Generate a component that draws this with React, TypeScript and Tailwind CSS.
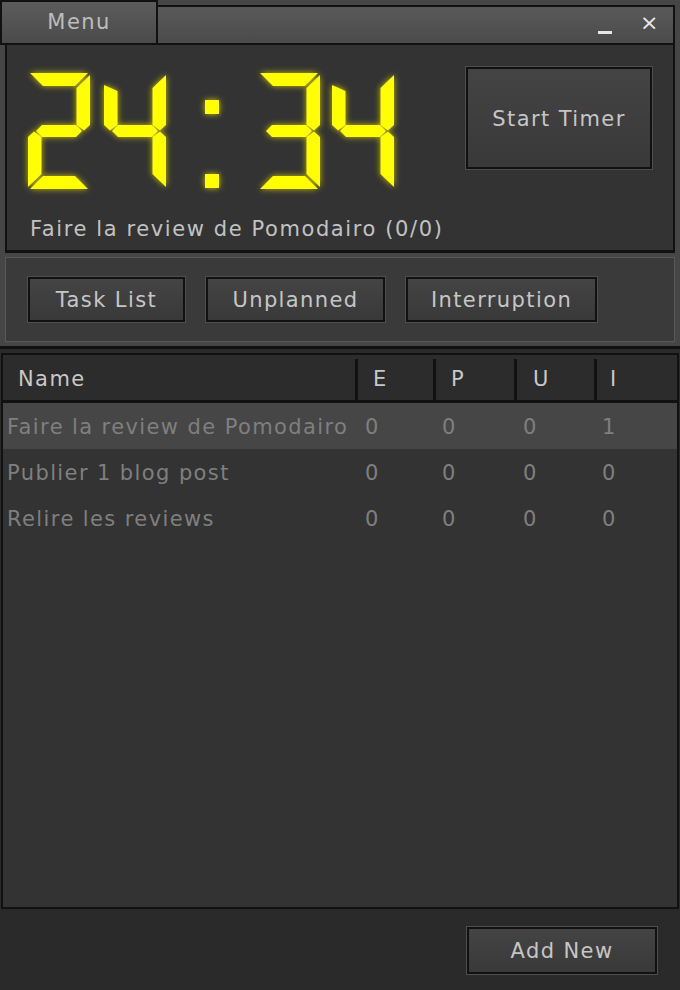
import React from "react";

const SEG: Record<string, string> = {
  a: "2,0 60,0 47,13 15,13",
  b: "62,2 62,52 56,57.5 48.5,52 48.5,15",
  c: "62,114 62,64 56,58.5 48.5,64 48.5,101",
  d: "2,116 60,116 47,103 15,103",
  e: "0,114 0,64 6,58.5 13.5,64 13.5,101",
  f: "0,2 0,52 6,57.5 13.5,52 13.5,15",
  g: "8,58 14,52 48,52 54,58 48,64 14,64",
};

const SEG4F = "0,12 0,52 6,57.5 13.5,52 13.5,18";

const DIGITS: Record<string, string[]> = {
  "2": ["a", "b", "g", "e", "d"],
  "3": ["a", "b", "g", "c", "d"],
  "4": ["f", "g", "b", "c"],
};

function Digit({ d }: { d: string }) {
  return (
    <svg width="64" height="116" viewBox="-1 0 64 116" className="[filter:drop-shadow(0_0_3px_rgba(255,240,0,0.75))]">
      {DIGITS[d].map((s) => (
        <polygon key={s} points={d === "4" && s === "f" ? SEG4F : SEG[s]} fill="#ffff00" />
      ))}
    </svg>
  );
}

function Colon() {
  return (
    <div className="flex flex-col justify-between h-[116px] pt-[27px] pb-[1px] [filter:drop-shadow(0_0_3px_rgba(255,240,0,0.75))]">
      <div className="w-[14px] h-[14px] bg-[#ffff00]" />
      <div className="w-[14px] h-[14px] bg-[#ffff00]" />
    </div>
  );
}

function Btn({ children, className = "" }: { children: React.ReactNode; className?: string }) {
  return (
    <div className={`border border-[#4e4e4e] ${className}`}>
      <div className="h-full w-full border-2 border-[#111] bg-gradient-to-b from-[#444] to-[#393939] flex items-center justify-center text-[#c6c6c6] pt-[3px]">
        {children}
      </div>
    </div>
  );
}

const font = { fontFamily: '"DejaVu Sans", Verdana, sans-serif' };

const rows = [
  { name: "Faire la review de Pomodairo", v: ["0", "0", "0", "1"], sel: true },
  { name: "Publier 1 blog post", v: ["0", "0", "0", "0"], sel: false },
  { name: "Relire les reviews", v: ["0", "0", "0", "0"], sel: false },
];

export default function App() {
  return (
    <div className="w-[680px] h-[990px] bg-[#2a2a2a] flex flex-col overflow-hidden text-[21px] tracking-[1.4px]" style={font}>
      {/* top window */}
      <div className="bg-[#464646] flex flex-col border-b-[3px] border-[#111]">
        {/* title row */}
        <div className="flex h-[45px]">
          <div className="w-[158px] h-[45px] border-2 border-[#111] bg-gradient-to-b from-[#5c5c5c] to-[#4a4a4a] flex items-center justify-center text-[#bdbdbd] pt-[1px]">
            Menu
          </div>
          <div className="flex-1 mt-[5px] h-[40px] border-t-2 border-b-2 border-r-2 border-[#111] bg-gradient-to-b from-[#595959] to-[#4b4b4b] relative mr-[5px]">
            <div className="absolute top-[24px] w-[14px] h-[3px] bg-[#e6e6e6]" style={{ left: 440 }} />
            <div className="absolute top-[5px] text-[#e8e8e8] text-[22px] leading-none" style={{ left: 482 }}>×</div>
          </div>
        </div>
        {/* timer panel */}
        <div className="mx-[5px] h-[208px] bg-[#333] border-l-2 border-r-2 border-b-[3px] border-[#111] flex">
          <div className="flex-1 flex flex-col pl-[20px]">
            <div className="flex items-start mt-[28px]">
              <Digit d="2" />
              <div className="w-[12px]" />
              <Digit d="4" />
              <div className="w-[38px]" />
              <Colon />
              <div className="w-[38px]" />
              <Digit d="3" />
              <div className="w-[10px]" />
              <Digit d="4" />
            </div>
            <div className="mt-[30px] ml-[3px] text-[#c2c2c2] leading-none tracking-[1.6px]">Faire la review de Pomodairo (0/0)</div>
          </div>
          <div className="w-[208px] pt-[21px] pr-[23px]">
            <Btn className="w-[188px] h-[104px]">Start Timer</Btn>
          </div>
        </div>
        {/* buttons panel */}
        <div className="mx-[5px] mt-[4px] mb-[4px] h-[85px] bg-[#3a3a3a] border border-[#595959] flex items-center gap-[19px] pl-[21px]">
          <Btn className="w-[159px] h-[47px]">Task List</Btn>
          <Btn className="w-[181px] h-[47px]">Unplanned</Btn>
          <Btn className="w-[193px] h-[47px]">Interruption</Btn>
        </div>
      </div>
      {/* table */}
      <div className="mt-[4px] h-[556px] mx-[1px] border-2 border-[#111] bg-[#333] flex flex-col">
        <div className="flex h-[48px] bg-[#2c2c2c] border-b-[3px] border-[#111] text-[#c8c8c8] pt-[4px]">
          <div className="w-[355px] border-r-[3px] border-[#111] flex items-center pl-[15px]">Name</div>
          <div className="w-[78px] border-r-[3px] border-[#111] flex items-center pl-[15px]">E</div>
          <div className="w-[81px] border-r-[3px] border-[#111] flex items-center pl-[15px]">P</div>
          <div className="w-[80px] border-r-[3px] border-[#111] flex items-center pl-[16px]">U</div>
          <div className="flex-1 flex items-center pl-[13px]">I</div>
        </div>
        {rows.map((r) => (
          <div key={r.name} className={`flex h-[46px] items-center text-[#7f7f7f] pt-[3px] ${r.sel ? "bg-[#464646]" : ""}`}>
            <div className="w-[358px] pl-[4px] whitespace-nowrap">{r.name}</div>
            <div className="w-[78px] pl-[4px]">{r.v[0]}</div>
            <div className="w-[81px] pl-[3px]">{r.v[1]}</div>
            <div className="w-[79px] pl-[3px]">{r.v[2]}</div>
            <div className="flex-1 pl-[3px]">{r.v[3]}</div>
          </div>
        ))}
      </div>
      {/* footer */}
      <div className="flex-1 flex justify-end pt-[17px] pr-[22px]">
        <Btn className="w-[192px] h-[49px]">Add New</Btn>
      </div>
    </div>
  );
}
